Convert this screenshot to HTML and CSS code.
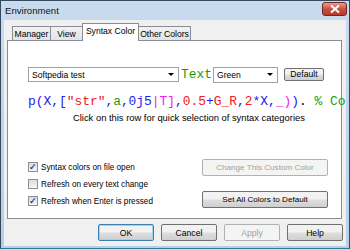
FILE: index.html
```html
<!DOCTYPE html>
<html lang="en">
<head>
    <meta charset="UTF-8">
    <title>Environment</title>
    <link rel="stylesheet" href="styles.css">
</head>
<body>
    <div class="window">
        <div class="titlebar">
            <span class="title">Environment</span>
            <span class="close-btn">
                <svg width="10" height="8" viewBox="0 0 10 8"><path d="M1 0.5 L9 7.5 M9 0.5 L1 7.5" stroke="#fff" stroke-width="2"/></svg>
            </span>
        </div>
        <div class="client">
            <div class="tabs">
                <div class="tab tab-manager">Manager</div>
                <div class="tab tab-view">View</div>
                <div class="tab selected">Syntax Color</div>
                <div class="tab tab-other">Other Colors</div>
            </div>
            <div class="panel">
                <div class="top-row">
                    <div class="combo combo-wide">
                        <span>Softpedia test</span>
                        <span class="arrow"></span>
                    </div>
                    <span class="code-word green">Text</span>
                    <div class="combo combo-color">
                        <span>Green</span>
                        <span class="arrow"></span>
                    </div>
                    <button class="btn btn-small">Default</button>
                </div>
                <div class="code-line"><span class="b">p(X,[</span><span class="r">"str"</span><span class="b">,</span><span class="g">a</span><span class="b">,0j5</span><span class="m">|T]</span><span class="b">,</span><span class="r">0.5</span><span class="b">+</span><span class="r">G_R</span><span class="b">,</span><span class="r">2</span><span class="b">*X,</span><span class="m">_)</span><span class="b">)</span><span class="k">. </span><span class="g">% Co</span></div>
                <div class="hint">Click on this row for quick selection of syntax categories</div>
                <div class="lower">
                    <div class="checks">
                        <label class="check"><span class="box checked">✓</span>Syntax colors on file open</label>
                        <label class="check"><span class="box"></span>Refresh on every text change</label>
                        <label class="check"><span class="box checked">✓</span>Refresh when Enter is pressed</label>
                    </div>
                    <div class="side-buttons">
                        <button class="btn btn-wide" disabled>Change This Custom Color</button>
                        <button class="btn btn-wide">Set All Colors to Default</button>
                    </div>
                </div>
            </div>
            <div class="footer">
                <button class="btn btn-dlg default">OK</button>
                <button class="btn btn-dlg">Cancel</button>
                <button class="btn btn-dlg" disabled>Apply</button>
                <button class="btn btn-dlg">Help</button>
            </div>
        </div>
    </div>
</body>
</html>
```

FILE: styles.css
```css
body {
    margin: 0;
    font-family: "Liberation Sans", Arial, sans-serif;
    font-size: 8.6px;
    color: #000;
}
.window {
    width: 350px;
    height: 249px;
    box-sizing: border-box;
    border: 1px solid #34495c;
    border-bottom-color: #2f7f95;
    background: linear-gradient(#c9dbee, #b7cfe9);
    display: flex;
    flex-direction: column;
    overflow: hidden;
}
.titlebar {
    height: 19px;
    display: flex;
    align-items: center;
    justify-content: space-between;
    padding: 0 2px 0 4px;
    flex-shrink: 0;
}
.title {
    font-size: 9.6px;
    color: #111;
}
.close-btn {
    width: 23px;
    height: 12px;
    margin-top: -4px;
    border: 1px solid #6d2b24;
    border-radius: 3px;
    background: linear-gradient(#e8a093, #c8503f 50%, #b83a2a);
    display: flex;
    align-items: center;
    justify-content: center;
}
.client {
    flex: 1;
    margin: 0 3px 2px 3px;
    background: #f0f0f0;
    display: flex;
    flex-direction: column;
    padding: 3px 4px 0 3px;
}
.tabs {
    display: flex;
    align-items: flex-end;
    padding-left: 5px;
    height: 17px;
    position: relative;
    z-index: 1;
}
.tab {
    height: 14px;
    line-height: 14px;
    text-align: center;
    border: 1px solid #898c95;
    border-bottom: none;
    margin-right: -1px;
    background: linear-gradient(#f2f2f2, #e3e3e3);
    box-sizing: border-box;
}
.tab-manager { width: 39px; }
.tab-view { width: 33px; }
.tab-other { width: 53px; }
.tab.selected {
    width: 57px;
    height: 18px;
    line-height: 14px;
    background: #fff;
    margin-bottom: -1px;
    position: relative;
}
.panel {
    height: 179px;
    box-sizing: border-box;
    border: 1px solid #898c95;
    background: #fff;
    padding: 26px 0 0 20px;
}
.top-row {
    display: flex;
    align-items: center;
    height: 15px;
}
.combo {
    height: 15px;
    box-sizing: border-box;
    border: 1px solid #a0a0a0;
    background: #fff;
    display: flex;
    align-items: center;
    justify-content: space-between;
    padding: 0 4px 0 3px;
}
.combo-wide {
    width: 151px;
}
.combo-color {
    width: 65px;
    height: 16px;
}
.arrow {
    width: 0;
    height: 0;
    border-left: 3px solid transparent;
    border-right: 3px solid transparent;
    border-top: 3px solid #000;
}
.code-word {
    font-family: "Liberation Mono", "Courier New", monospace;
    font-size: 12.9px;
    margin: 0 1px 0 2px;
}
.btn {
    font-family: "Liberation Sans", Arial, sans-serif;
    font-size: 8.6px;
    color: #000;
    border: 1px solid #707070;
    border-radius: 2px;
    background: linear-gradient(#f2f2f2 45%, #dddddd 55%, #cfcfcf);
    padding: 0;
    box-sizing: border-box;
}
.btn:disabled {
    color: #a0a0a0;
    border-color: #adb2b5;
    background: #f4f4f4;
}
.btn-small {
    width: 40px;
    height: 13px;
    margin-left: 6px;
    line-height: 11px;
}
.code-line {
    font-family: "Liberation Mono", "Courier New", monospace;
    font-size: 12.9px;
    line-height: 15px;
    margin-top: 12px;
    white-space: nowrap;
}
.b { color: #2020f0; }
.r { color: #f02020; }
.g { color: #10a010; }
.green { color: #10a010; }
.m { color: #f020f0; }
.k { color: #000; }
.hint {
    font-size: 9.4px;
    line-height: 13px;
    margin-top: 2px;
    padding-left: 45px;
}
.lower {
    display: flex;
    justify-content: space-between;
    margin-top: 38px;
    padding-right: 13px;
}
.checks {
    display: flex;
    flex-direction: column;
    gap: 7px;
}
.check {
    display: flex;
    align-items: center;
    height: 10px;
    font-size: 8.2px;
}
.box {
    width: 10px;
    height: 10px;
    box-sizing: border-box;
    border: 1px solid #8f8f8f;
    background: linear-gradient(#dcdcdc, #f6f6f6);
    margin-right: 3px;
    font-size: 9px;
    line-height: 8px;
    color: #2a45b0;
    text-align: center;
    font-weight: bold;
}
.side-buttons {
    display: flex;
    flex-direction: column;
    gap: 15px;
    margin-top: -3px;
}
.btn-wide {
    width: 126px;
    height: 17px;
    font-size: 8.1px;
}
.footer {
    display: flex;
    justify-content: flex-end;
    gap: 7px;
    padding-top: 5px;
    margin-right: -1px;
}
.btn-dlg {
    width: 56px;
    height: 17px;
}
.btn-dlg.default {
    border-color: #3c7fb1;
    box-shadow: inset 0 0 0 1px #9fd3f3;
}
```
